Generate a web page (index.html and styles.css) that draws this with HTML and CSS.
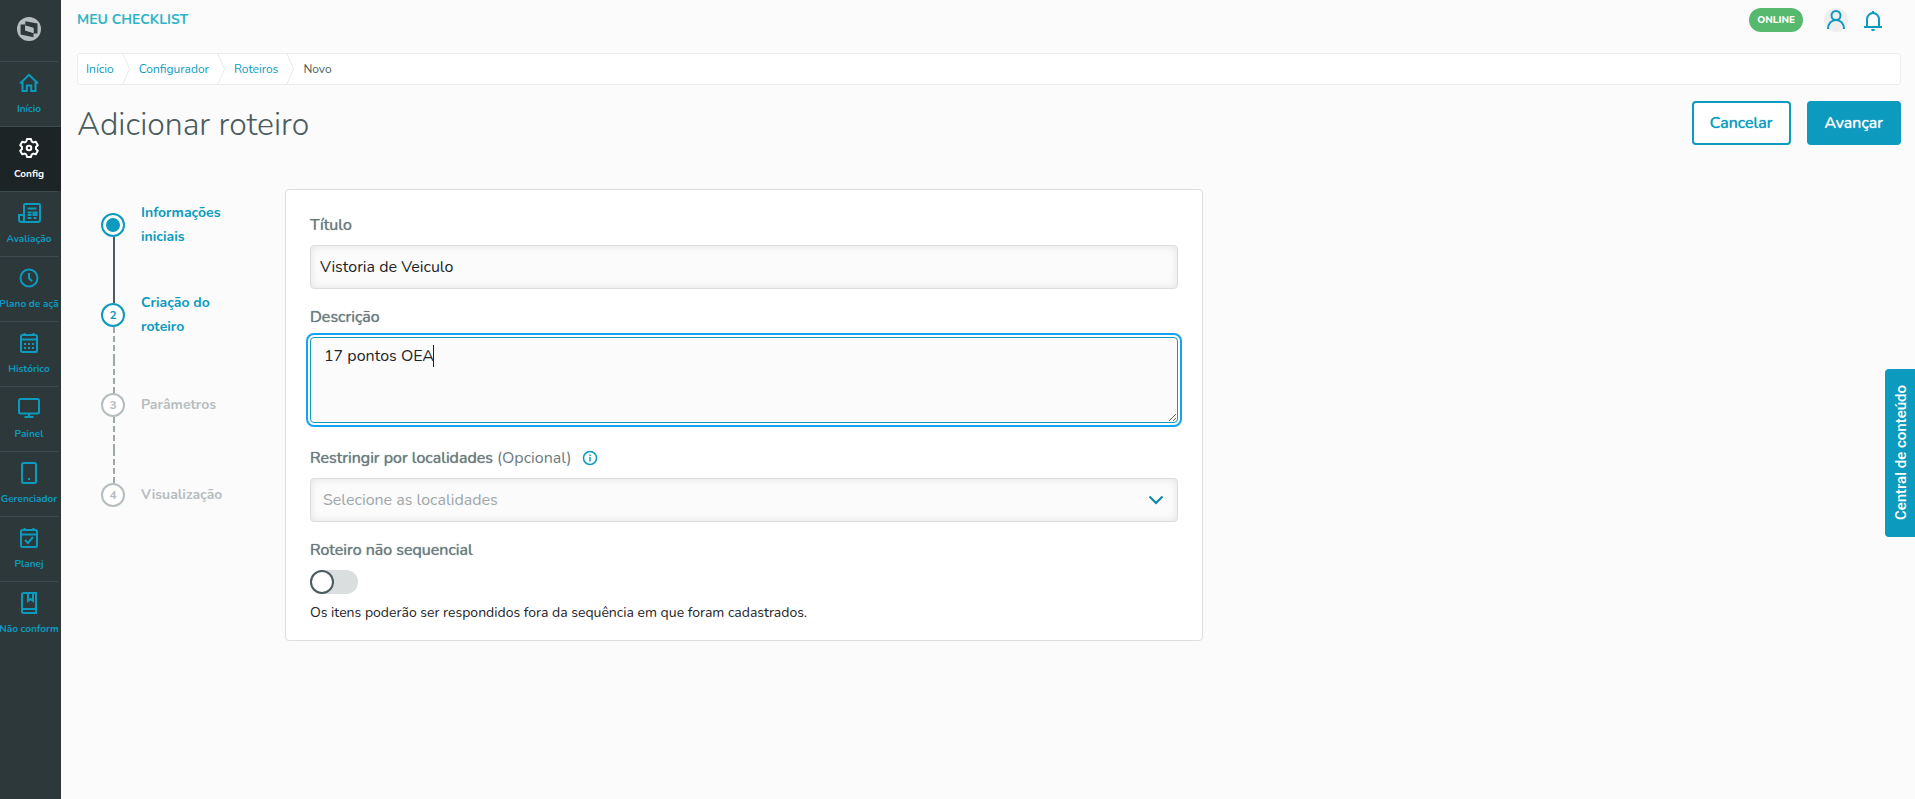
FILE: index.html
```html
<!DOCTYPE html>
<html lang="pt-BR">
<head>
<meta charset="utf-8">
<meta name="viewport" content="width=device-width, initial-scale=1">
<title>Adicionar roteiro</title>
<link rel="stylesheet" href="styles.css">
</head>
<body>
<div class="app">
  <nav class="sidebar" aria-label="Menu principal">
    <a class="brand" href="#" aria-label="Página inicial">
      <svg width="24" height="24" viewBox="0 0 24 24"><circle cx="12" cy="12" r="12" fill="#b6bdbf"/><path d="M8.300 4.200 20.500 6.600V16.500H16.500V11L8.300 8.500z" fill="#2d383a"/><path d="M3.600 7.500H8.300V13.500L16.500 16V20.200L3.600 17.500z" fill="#2d383a"/><path d="M8.300 8.500 16.500 11V16L8.300 13.500z" fill="#b6bdbf"/></svg>
    </a>
    <a class="nav-item" href="#"><svg class="icon" viewBox="0 0 24 24"><path d="M3 12.500 12 3.800l9 8.700M5.500 10.500V20h4.300v-5.500h4.400V20h4.300v-9.500"/></svg><span class="nav-label">Início</span></a>
    <a class="nav-item active" href="#" aria-current="page"><svg class="icon" viewBox="0 0 24 24"><path stroke-linejoin="round" d="M9.300 5.500 10 3h4l.7 2.500 1.600.9 2.500-.6 2 3.400L19 11v2l1.800 1.800-2 3.400-2.500-.6-1.600.9L14 21h-4l-.7-2.500-1.600-.9-2.500.6-2-3.400L5 13v-2L3.200 9.200l2-3.400 2.500.6z"/><circle cx="12" cy="12" r="2.300"/></svg><span class="nav-label">Config</span></a>
    <a class="nav-item" href="#"><svg class="icon" viewBox="0 0 24 24"><path d="M4.500 21H21a2 2 0 0 0 2-2V4a1 1 0 0 0-1-1H8a1 1 0 0 0-1 1v14.500a2.500 2.500 0 0 1-5 0V14h4.500M10.500 7.500h9M10.500 11.500h4M10.500 14h4M10.500 17h4M16.500 11.500h3v2.500h-3zM16.500 17h3"/></svg><span class="nav-label">Avaliação</span></a>
    <a class="nav-item" href="#"><svg class="icon" viewBox="0 0 24 24"><circle cx="12" cy="12" r="8.500"/><path d="M12 7v5.300l3 3"/></svg><span class="nav-label">Plano de açã</span></a>
    <a class="nav-item" href="#"><svg class="icon" viewBox="0 0 24 24"><rect x="4" y="4" width="16" height="17" rx="1.500"/><path d="M4 8.500h16M7.500 2v3M16.500 2v3"/><path stroke-dasharray="2 2" d="M7 13h10M7 17h10"/></svg><span class="nav-label">Histórico</span></a>
    <a class="nav-item" href="#"><svg class="icon" viewBox="0 0 24 24"><rect x="2" y="3" width="20" height="14.500" rx="1.500"/><path d="M12 17.500V21M7.500 21h9"/></svg><span class="nav-label">Painel</span></a>
    <a class="nav-item" href="#"><svg class="icon" viewBox="0 0 24 24"><rect x="5" y="2" width="14" height="20" rx="1.500"/><path d="M11 18h2"/></svg><span class="nav-label">Gerenciador</span></a>
    <a class="nav-item" href="#"><svg class="icon" viewBox="0 0 24 24"><rect x="4" y="4" width="16" height="17" rx="1.500"/><path d="M4 8.500h16M7.500 2v3M16.500 2v3M8 14l3 3 5-6"/></svg><span class="nav-label">Planej</span></a>
    <a class="nav-item" href="#"><svg class="icon" viewBox="0 0 24 24"><path d="M19 18V2H6.500A1.500 1.500 0 0 0 5 3.500v17A1.500 1.500 0 0 0 6.500 22H19v-4H5.500M11 2.500V10l2.500-2 2.500 2V2.500"/></svg><span class="nav-label">Não conform</span></a>
  </nav>

  <div class="page">
    <header class="topbar">
      <span class="product">MEU CHECKLIST</span>
      <div class="tools">
        <span class="status">ONLINE</span>
        <button class="tool avatar" type="button" aria-label="Perfil"><svg class="icon" viewBox="0 0 24 24"><circle cx="12" cy="7.500" r="4.500"/><path d="M4 21c0-5.500 3.500-9 8-9s8 3.500 8 9"/></svg></button>
        <button class="tool" type="button" aria-label="Notificações"><svg class="icon" viewBox="0 0 24 24"><path d="M3 19h18M6 19v-7.500a6 6.500 0 0 1 12 0V19M12 3v2.500M10.500 22h3"/></svg></button>
      </div>
    </header>

    <nav class="breadcrumb" aria-label="Trilha">
      <a class="crumb" href="#">Início</a><svg class="crumb-sep" viewBox="0 0 9 32"><path d="M.5 0l7 16-7 16"/></svg>
      <a class="crumb" href="#">Configurador</a><svg class="crumb-sep" viewBox="0 0 9 32"><path d="M.5 0l7 16-7 16"/></svg>
      <a class="crumb" href="#">Roteiros</a><svg class="crumb-sep" viewBox="0 0 9 32"><path d="M.5 0l7 16-7 16"/></svg>
      <span class="crumb current" aria-current="page">Novo</span>
    </nav>

    <div class="heading">
      <h1 class="title">Adicionar roteiro</h1>
      <div class="actions">
        <button class="btn" type="button">Cancelar</button>
        <button class="btn primary" type="button">Avançar</button>
      </div>
    </div>

    <main class="content">
      <ol class="steps">
        <li class="step current"><span class="dot"></span><span class="step-label">Informações iniciais</span></li>
        <li class="step next"><span class="dot">2</span><span class="step-label">Criação do roteiro</span></li>
        <li class="step"><span class="dot">3</span><span class="step-label">Parâmetros</span></li>
        <li class="step"><span class="dot">4</span><span class="step-label">Visualização</span></li>
      </ol>

      <form class="card">
        <div class="field">
          <label class="label" for="titulo">Título</label>
          <input class="control" id="titulo" type="text" value="Vistoria de Veiculo">
        </div>
        <div class="field">
          <label class="label" for="descricao">Descrição</label>
          <div class="area-wrap">
            <textarea class="control area" id="descricao" autofocus>17 pontos OEA</textarea>
            <span class="caret" aria-hidden="true"></span>
          </div>
        </div>
        <div class="field">
          <div class="label-row">
            <label class="label" for="localidades">Restringir por localidades <span class="optional">(Opcional)</span></label>
            <svg class="info" viewBox="0 0 16 16" role="img" aria-label="Ajuda"><circle cx="8" cy="8" r="6.500"/><path d="M8 7v4.500M8 4.500V6"/></svg>
          </div>
          <div class="select-wrap">
            <select class="control select" id="localidades"><option>Selecione as localidades</option></select>
            <svg class="chevron" viewBox="0 0 16 16"><path d="M1.500 4.500 8 11l6.500-6.500"/></svg>
          </div>
        </div>
        <div class="field">
          <label class="label" for="sequencial">Roteiro não sequencial</label>
          <input class="switch" id="sequencial" type="checkbox" role="switch" aria-describedby="sequencial-ajuda">
          <p class="help" id="sequencial-ajuda">Os itens poderão ser respondidos fora da sequência em que foram cadastrados.</p>
        </div>
      </form>
    </main>
  </div>
  <button class="content-tab" type="button">Central de conteúdo</button>
</div>
</body>
</html>
```
FILE: styles.css
```css
:root {
  --blue: #0c9abe;
  --slate: #4a5c60;
  --line: #dadedf;
  --font: Nunito, Lato, "Open Sans", sans-serif;
}

*, ::before, ::after { box-sizing: border-box; }

body {
  margin: 0;
  background: #fbfbfb;
  color: #1d2426;
  font: 16px/24px var(--font);
}

button, input, select, textarea { font: inherit; }
a { color: inherit; text-decoration: none; }

.app { display: flex; min-height: 100vh; }

.icon { flex: none; width: 24px; height: 24px; fill: none; stroke: currentColor; stroke-width: 2; }

/* Sidebar */
.sidebar {
  flex: none;
  width: 61px;
  padding-right: 3px;
  background: #2d383a;
  color: var(--blue);
}
.brand {
  display: flex;
  align-items: center;
  justify-content: center;
  height: 61px;
  padding-bottom: 3px;
}
.nav-item {
  display: flex;
  flex-direction: column;
  align-items: center;
  gap: 6px;
  height: 65px;
  padding-top: 9px;
  border-top: 1px solid #3f4c4f;
}
.nav-item.active { margin-right: -3px; padding-right: 3px; background: #1c2426; color: #fff; }
.nav-label {
  font-size: 10px;
  font-weight: 700;
  line-height: 16px;
  white-space: nowrap;
}

/* Page */
.page { flex: 1; min-width: 0; padding: 0 14px 0 16px; }

.topbar { display: flex; align-items: center; justify-content: space-between; height: 40px; }
.product { color: #2fb5c7; font-size: 14px; font-weight: 700; }
.tools { display: flex; align-items: center; padding-right: 16px; }
.status {
  margin-right: 21px;
  padding: 0 8px;
  border-radius: 12px;
  background: #56b96d;
  color: #fff;
  font-size: 10px;
  font-weight: 800;
}
.tool {
  display: flex;
  align-items: center;
  justify-content: center;
  width: 24px;
  height: 24px;
  margin-left: 13px;
  padding: 0;
  border: 0;
  border-radius: 50%;
  background: none;
  color: var(--blue);
}
.avatar { margin-left: 0; background: #eee; }

.breadcrumb {
  display: flex;
  align-items: center;
  gap: 8px;
  height: 32px;
  margin-top: 13px;
  padding-left: 8px;
  border: 1px solid #ebeded;
  border-radius: 3px;
  background: #fff;
  color: var(--blue);
  font-size: 12px;
}
.crumb-sep { width: 9px; height: 32px; fill: none; stroke: #e8eaea; }
.current.crumb { color: var(--slate); }

.heading { display: flex; align-items: flex-start; justify-content: space-between; margin-top: 16px; }
.title { margin: 0; color: var(--slate); font-size: 32px; font-weight: 300; line-height: 48px; }
.actions { display: flex; gap: 16px; }
.btn {
  height: 44px;
  padding: 0 16px;
  border: 2px solid var(--blue);
  border-radius: 4px;
  background: #fff;
  color: var(--blue);
  text-shadow: 0 0 1px currentColor;
}
.primary { background: var(--blue); color: #fff; }

.content {
  display: grid;
  grid-template-columns: 184px minmax(0, 918px);
  align-items: start;
  margin-top: 40px;
  padding-left: 24px;
}

/* Stepper */
.steps { margin: 0; padding: 12px 0 0; list-style: none; }
.step {
  display: grid;
  grid-template-columns: 24px 96px;
  column-gap: 16px;
  align-items: center;
  grid-template-rows: 48px 42px;
  color: #b6bdbf;
  font-size: 14px;
  font-weight: 700;
  position: relative;
}
.dot {
  display: grid;
  place-items: center;
  width: 24px;
  height: 24px;
  border: 2px solid currentColor;
  border-radius: 50%;
  background: #fff;
  font-size: 12px;
  line-height: 20px;
}
.step.current, .step.next { color: var(--blue); }
.step.current .dot::after { content: ""; width: 14px; height: 14px; border-radius: 50%; background: currentColor; }
.step:not(:last-child)::before, .step:not(:last-child)::after {
  content: "";
  position: absolute;
  left: 12px;
  top: 36px;
  height: 33px;
  border-left: 2px dashed #9ea7a9;
}
.step:not(:last-child)::after { top: 69px; }
.step.current::before, .step.current::after { border-left: 2px solid var(--slate); }

/* Form */
.card {
  display: grid;
  gap: 16px;
  padding: 23px 24px 16px;
  border: 1px solid var(--line);
  border-radius: 4px;
  background: #fff;
}
.field { display: flex; flex-direction: column; gap: 8px; }
.label { color: #6d7b7e; text-shadow: 0 0 1px currentColor; }
.label-row { display: flex; align-items: center; gap: 10px; }
.optional { text-shadow: none; }
.info { width: 16px; height: 16px; fill: none; stroke: var(--blue); stroke-width: 1.5; }

.control {
  width: 100%;
  height: 44px;
  padding: 0 9px;
  border: 1px solid var(--line);
  border-radius: 4px;
  background: #fbfbfb;
  box-shadow: inset 0 0 8px #0000001a;
  color: #1d2426;
}
.area-wrap { position: relative; padding-bottom: 7px; }
.area {
  display: block;
  height: 86px;
  padding: 6px 13px;
  resize: vertical;
  caret-color: transparent;
}
.area:focus { border-color: var(--blue); outline: 2px solid #14a2f5; outline-offset: 2px; box-shadow: none; }
.caret { position: absolute; left: 123px; top: 8px; width: 1px; height: 22px; background: #1d2426; }
.select-wrap { display: grid; align-items: center; }
.select-wrap > * { grid-area: 1 / 1; }
.select { appearance: none; padding: 0 12px; color: #9ea7a9; }
.chevron {
  justify-self: end;
  width: 16px;
  height: 16px;
  margin-right: 14px;
  fill: none;
  stroke: #0c86a8;
  stroke-width: 2;
  pointer-events: none;
}

.switch {
  appearance: none;
  display: block;
  width: 48px;
  height: 24px;
  margin: 0;
  border-radius: 12px;
  background: #dadedf;
}
.switch::before {
  content: "";
  display: block;
  width: 24px;
  height: 24px;
  border: 2px solid var(--slate);
  border-radius: 50%;
  background: #fff;
}
.switch:checked::before { margin-left: auto; }
.help { margin: 0; font-size: 14px; line-height: 22px; }

.content-tab {
  position: fixed;
  right: 0;
  top: 369px;
  width: 30px;
  height: 168px;
  padding: 0;
  border: 0;
  border-radius: 4px 0 0 4px;
  background: var(--blue);
  color: #fff;
  font: 500 15px/32px Roboto, sans-serif;
  writing-mode: sideways-lr;
}
```
